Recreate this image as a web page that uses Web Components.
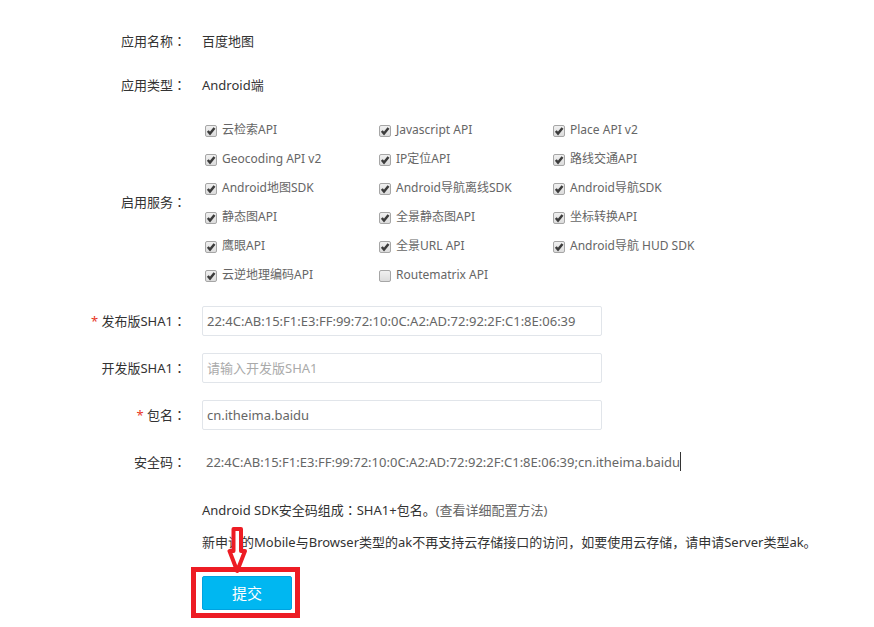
<!DOCTYPE html>
<html lang="zh-CN">
<head>
<meta charset="utf-8">
<title>百度地图</title>
<style>
  body {
    margin: 0;
    background: #fff;
    color: #333;
    font: 13px/30px "Noto Sans", "Noto Sans CJK SC", sans-serif;
  }
</style>
</head>
<body>
<app-form></app-form>

<script>
// full-width colon, centred in its cell
const COLON = '<span lang="zh-Hant" style="font-family: \'Noto Sans CJK TC\', sans-serif; line-height: 1">：</span>'

class FormRow extends HTMLElement {

  constructor() {
    super()
    this.shadow = this.attachShadow({ mode: 'open' })
  }

  connectedCallback() {
    const name = this.getAttribute('name')

    this.shadow.innerHTML = `
    <style>
      :host {
        display: grid;
        grid-template-columns: 186px minmax(0, 1fr);
        column-gap: 16px;
        align-items: center;
        min-height: 44px;
      }

      .name {
        text-align: right;
      }
    </style>
    <div class="name">${name ? name + COLON : ''}</div>
    <div><slot></slot></div>
    `
  }

}

class TextField extends HTMLElement {

  constructor() {
    super()
    this.shadow = this.attachShadow({ mode: 'open' })
  }

  connectedCallback() {
    const star = this.hasAttribute('required') ? '<span class="star">*</span> ' : ''

    this.shadow.innerHTML = `
    <style>
      :host {
        display: grid;
        grid-template-columns: 186px minmax(0, 400px);
        column-gap: 16px;
        align-items: center;
        min-height: 47px;
      }

      label {
        text-align: right;
      }

      .star {
        color: #e8371f;
      }

      input {
        box-sizing: border-box;
        width: 100%;
        height: 30px;
        padding: 0 4px;
        border: 1px solid #e1e5ea;
        border-radius: 2px;
        background: #fff;
        color: #666;
        font: inherit;
        outline: none;
      }

      input::placeholder {
        color: #aaa;
      }
    </style>
    <label for="field">${star}${this.getAttribute('label')}${COLON}</label>
    <input id="field" type="text">
    `

    const input = this.shadow.querySelector('#field')
    input.value = this.getAttribute('value') || ''
    input.placeholder = this.getAttribute('placeholder') || ''
  }

}

class SafeCode extends HTMLElement {

  constructor() {
    super()
    this.shadow = this.attachShadow({ mode: 'open' })
    this.shadow.innerHTML = `
    <style>
      :host {
        display: flex;
        align-items: center;
        min-height: 47px;
        padding-left: 4px;
        color: #666;
      }

      .caret {
        width: 1px;
        height: 19px;
        background: #333;
      }
    </style>
    <output><slot></slot></output>
    <span class="caret"></span>
    `
  }

}

class ServiceCheck extends HTMLElement {

  constructor() {
    super()
    this.shadow = this.attachShadow({ mode: 'open' })
    this.shadow.innerHTML = `
    <style>
      :host {
        display: block;
        line-height: 29px;
        font-size: 12px;
        color: #666;
      }

      label {
        display: flex;
        align-items: center;
        gap: 5px;
        padding-left: 3px;
        white-space: nowrap;
      }

      .box {
        display: grid;
        padding-top: 2px;
      }

      input, svg {
        grid-area: 1 / 1;
        width: 12px;
        height: 12px;
      }

      input {
        appearance: none;
        box-sizing: border-box;
        margin: 0;
        border: 1px solid #a6a6a6;
        border-radius: 2px;
        background: linear-gradient(#f0f0f0, #dcdcdc);
      }

      svg {
        visibility: hidden;
        pointer-events: none;
      }

      input:checked + svg {
        visibility: visible;
      }
    </style>
    <label>
      <span class="box">
        <input type="checkbox">
        <svg viewBox="0 0 12 12"><path d="M2.800 6l2.200 2.500 4.500-5.500" fill="none" stroke="#3c3c3c" stroke-width="2.500"/></svg>
      </span>
      <span><slot></slot></span>
    </label>
    `
  }

  connectedCallback() {
    this.shadow.querySelector('input').checked = this.hasAttribute('checked')
  }

}

class ServiceList extends HTMLElement {

  constructor() {
    super()
    this.shadow = this.attachShadow({ mode: 'open' })
    this.shadow.innerHTML = `
    <style>
      :host {
        display: grid;
        grid-template-columns: repeat(3, 174px);
        padding: 8px 0;
      }
    </style>
    <slot></slot>
    `
  }

}

class SubmitButton extends HTMLElement {

  constructor() {
    super()
    this.shadow = this.attachShadow({ mode: 'open' })
    this.shadow.innerHTML = `
    <style>
      :host {
        display: inline-block;
        position: relative;
      }

      button {
        display: block;
        width: 90px;
        height: 34px;
        padding: 0;
        border: 1px solid #00a2e0;
        border-radius: 2px;
        background: #00b7f1;
        color: #fff;
        font: inherit;
        font-size: 15px;
        line-height: 32px;
      }

      /* red frame and arrow laid over the form */
      .frame {
        position: absolute;
        inset: -9px -8px -8px -11px;
        border: 5px solid #ed1c24;
        pointer-events: none;
      }

      svg {
        position: absolute;
        left: 25px;
        bottom: 36px;
        width: 21px;
        height: 48px;
        pointer-events: none;
      }
    </style>
    <button type="submit"><slot></slot></button>
    <div class="frame"></div>
    <svg viewBox="0 0 21 48">
      <path d="M6.500 3h7.500v22h4L10.200 45 2.500 25h4z" fill="#fff" stroke="#ed1c24" stroke-width="4" stroke-linejoin="round"/>
    </svg>
    `
  }

}

class AppForm extends HTMLElement {

  constructor() {
    super()
    this.shadow = this.attachShadow({ mode: 'open' })
    this.shadow.innerHTML = `
    <style>
      :host {
        display: block;
        padding: 19px 0 16px;
      }

      .notes {
        padding-top: 9px;
        line-height: 32px;
      }

      p {
        margin: 0;
      }

      a {
        color: #666;
        text-decoration: none;
      }

      .actions {
        padding-top: 18px;
      }
    </style>
    <form>
      <form-row name="应用名称">百度地图</form-row>
      <form-row name="应用类型">Android端</form-row>
      <form-row name="启用服务">
        <service-list>
          <service-check checked>云检索API</service-check>
          <service-check checked>Javascript API</service-check>
          <service-check checked>Place API v2</service-check>
          <service-check checked>Geocoding API v2</service-check>
          <service-check checked>IP定位API</service-check>
          <service-check checked>路线交通API</service-check>
          <service-check checked>Android地图SDK</service-check>
          <service-check checked>Android导航离线SDK</service-check>
          <service-check checked>Android导航SDK</service-check>
          <service-check checked>静态图API</service-check>
          <service-check checked>全景静态图API</service-check>
          <service-check checked>坐标转换API</service-check>
          <service-check checked>鹰眼API</service-check>
          <service-check checked>全景URL API</service-check>
          <service-check checked>Android导航 HUD SDK</service-check>
          <service-check checked>云逆地理编码API</service-check>
          <service-check>Routematrix API</service-check>
        </service-list>
      </form-row>
      <text-field required label="发布版SHA1" value="22:4C:AB:15:F1:E3:FF:99:72:10:0C:A2:AD:72:92:2F:C1:8E:06:39"></text-field>
      <text-field label="开发版SHA1" placeholder="请输入开发版SHA1"></text-field>
      <text-field required label="包名" value="cn.itheima.baidu"></text-field>
      <form-row name="安全码">
        <safe-code>22:4C:AB:15:F1:E3:FF:99:72:10:0C:A2:AD:72:92:2F:C1:8E:06:39;cn.itheima.baidu</safe-code>
      </form-row>
      <form-row>
        <div class="notes">
          <p>Android SDK安全码组成${COLON}SHA1+包名。<a href="#">(查看详细配置方法)</a></p>
          <p>新申请的Mobile与Browser类型的ak不再支持云存储接口的访问，如要使用云存储，请申请Server类型ak。</p>
        </div>
        <div class="actions">
          <submit-button>提交</submit-button>
        </div>
      </form-row>
    </form>
    `
  }

}

customElements.define('form-row', FormRow)
customElements.define('text-field', TextField)
customElements.define('safe-code', SafeCode)
customElements.define('service-check', ServiceCheck)
customElements.define('service-list', ServiceList)
customElements.define('submit-button', SubmitButton)
customElements.define('app-form', AppForm)
</script>
</body>
</html>
